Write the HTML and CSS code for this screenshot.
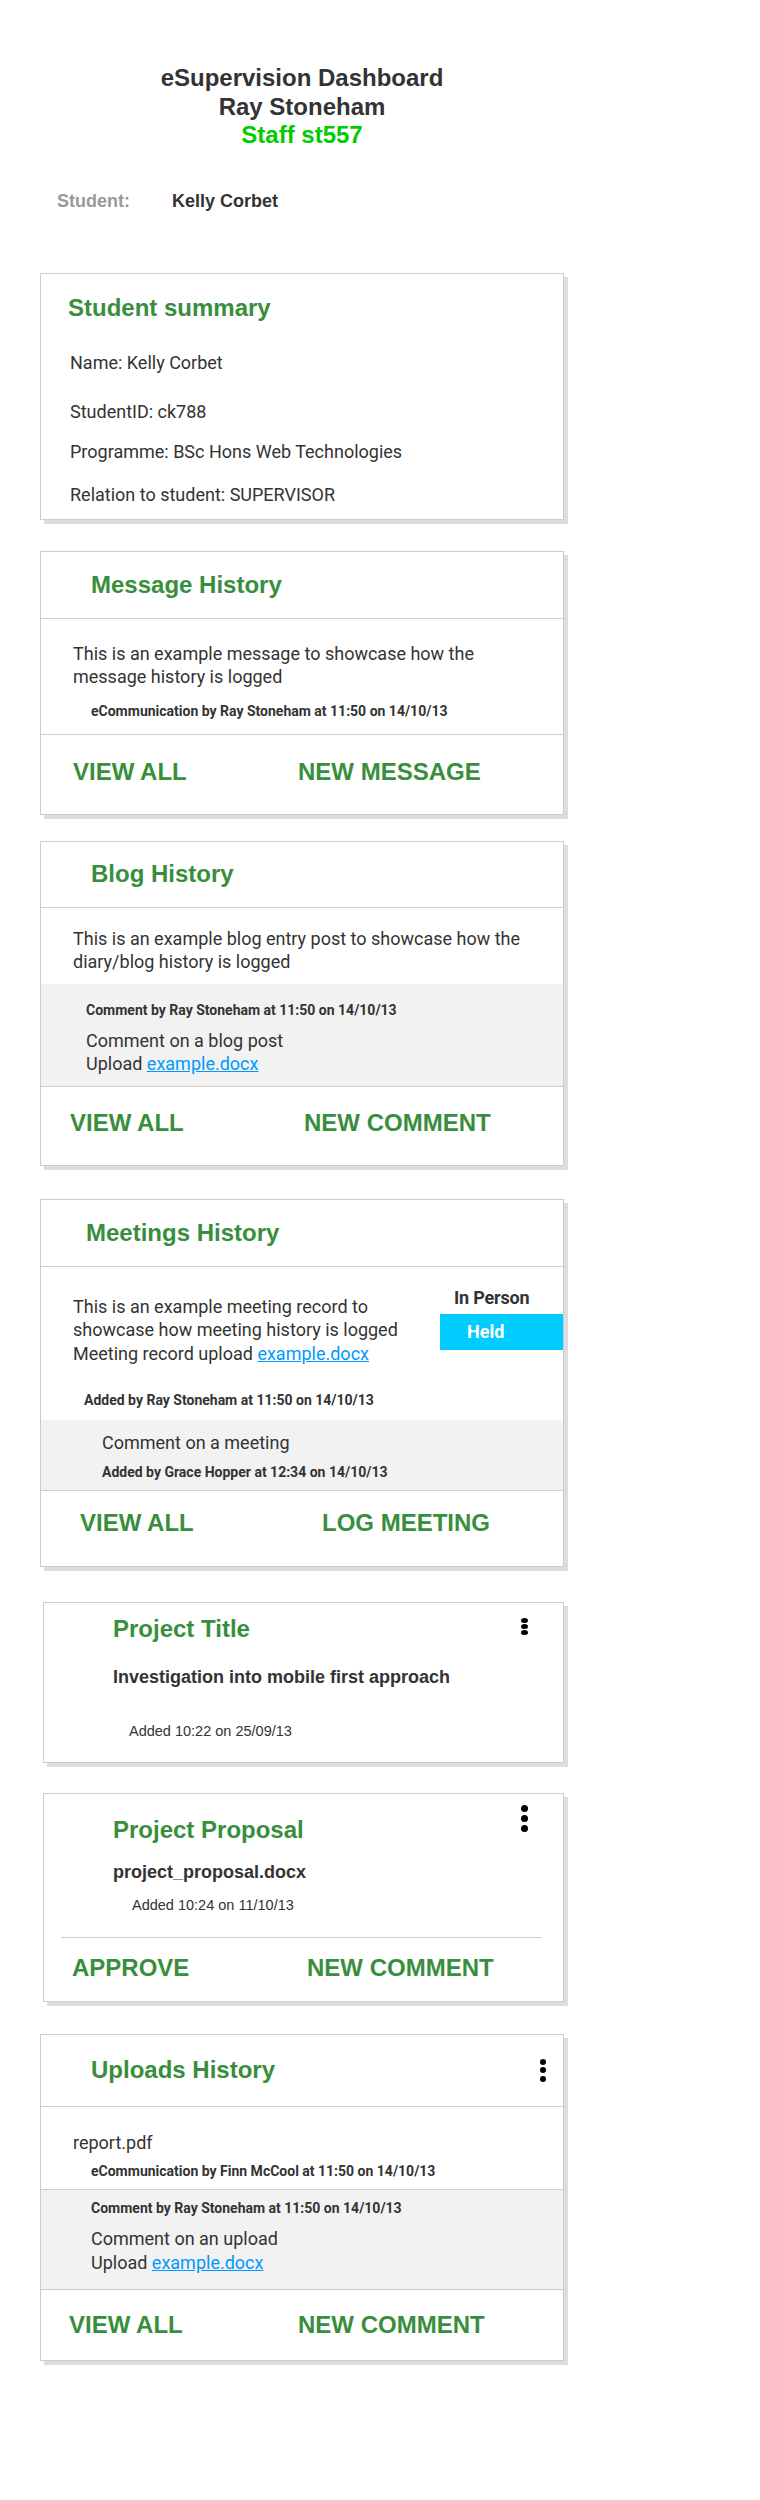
FILE: index.html
```html
<!DOCTYPE html>
<html lang="en">
<head>
<meta charset="utf-8">
<title>eSupervision Dashboard</title>
<link rel="stylesheet" href="styles.css">
</head>
<body>
<div class="page">
  <header class="top">
    <div>eSupervision Dashboard</div>
    <div>Ray Stoneham</div>
    <div class="staff">Staff st557</div>
  </header>

  <div class="student-row">
    <span class="student-label">Student:</span>
    <span class="student-name">Kelly Corbet</span>
  </div>

  <section class="card summary">
    <h2 class="title">Student summary</h2>
    <p class="s-name">Name: Kelly Corbet</p>
    <p class="s-id">StudentID: ck788</p>
    <p class="s-prog">Programme: BSc Hons Web Technologies</p>
    <p class="s-rel">Relation to student: SUPERVISOR</p>
  </section>

  <section class="card messages">
    <div class="head"><h2 class="title">Message History</h2></div>
    <div class="body">
      <p class="text">This is an example message to showcase how the message history is logged</p>
      <p class="meta">eCommunication by Ray Stoneham at 11:50 on 14/10/13</p>
    </div>
    <div class="foot">
      <span class="btn first">VIEW ALL</span>
      <span class="btn">NEW MESSAGE</span>
    </div>
  </section>

  <section class="card blog">
    <div class="head"><h2 class="title">Blog History</h2></div>
    <div class="body">
      <p class="text">This is an example blog entry post to showcase how the diary/blog history is logged</p>
    </div>
    <div class="comment">
      <p class="meta">Comment by Ray Stoneham at 11:50 on 14/10/13</p>
      <p class="text">Comment on a blog post<br>Upload <a href="#">example.docx</a></p>
    </div>
    <div class="foot">
      <span class="btn first">VIEW ALL</span>
      <span class="btn">NEW COMMENT</span>
    </div>
  </section>

  <section class="card meetings">
    <div class="head"><h2 class="title">Meetings History</h2></div>
    <div class="body">
      <div class="m-row">
        <p class="text">This is an example meeting record to showcase how meeting history is logged<br>Meeting record upload <a href="#">example.docx</a></p>
        <div class="m-status">
          <div class="m-type">In Person</div>
          <div class="m-held">Held</div>
        </div>
      </div>
      <p class="meta">Added by Ray Stoneham at 11:50 on 14/10/13</p>
    </div>
    <div class="comment">
      <p class="text">Comment on a meeting</p>
      <p class="meta">Added by Grace Hopper at 12:34 on 14/10/13</p>
    </div>
    <div class="foot">
      <span class="btn first">VIEW ALL</span>
      <span class="btn">LOG MEETING</span>
    </div>
  </section>

  <section class="card narrow ptitle">
    <div class="phead">
      <h2 class="title">Project Title</h2>
      <span class="kebab small"><i></i><i></i><i></i></span>
    </div>
    <p class="strong">Investigation into mobile first approach</p>
    <p class="added">Added 10:22 on 25/09/13</p>
  </section>

  <section class="card narrow proposal">
    <div class="phead">
      <h2 class="title">Project Proposal</h2>
      <span class="kebab large"><i></i><i></i><i></i></span>
    </div>
    <p class="strong">project_proposal.docx</p>
    <p class="added">Added 10:24 on 11/10/13</p>
    <div class="rule"></div>
    <div class="foot">
      <span class="btn first">APPROVE</span>
      <span class="btn">NEW COMMENT</span>
    </div>
  </section>

  <section class="card uploads">
    <div class="head">
      <h2 class="title">Uploads History</h2>
      <span class="kebab medium"><i></i><i></i><i></i></span>
    </div>
    <div class="body">
      <p class="text">report.pdf</p>
      <p class="meta">eCommunication by Finn McCool at 11:50 on 14/10/13</p>
    </div>
    <div class="comment">
      <p class="meta">Comment by Ray Stoneham at 11:50 on 14/10/13</p>
      <p class="text">Comment on an upload<br>Upload <a href="#">example.docx</a></p>
    </div>
    <div class="foot">
      <span class="btn first">VIEW ALL</span>
      <span class="btn">NEW COMMENT</span>
    </div>
  </section>
</div>
</body>
</html>
```

FILE: styles.css
```css
* { box-sizing: border-box; }

body {
  margin: 0;
  background: #ffffff;
  color: #333333;
  font-family: Roboto, "Noto Sans", sans-serif;
}

p, h2 { margin: 0; }

.page {
  width: 524px;
  margin-left: 40px;
  padding-top: 64px;
  padding-bottom: 140px;
}

/* ---------- top header ---------- */
.top {
  text-align: center;
  font-family: "Liberation Sans", Arial, sans-serif;
  font-weight: bold;
  font-size: 24px;
  line-height: 28.5px;
  color: #333333;
}
.staff { color: #00cc00; }

.student-row {
  display: flex;
  margin-top: 41px;
  padding-left: 17px;
  font-family: "Liberation Sans", Arial, sans-serif;
  font-weight: bold;
  font-size: 18px;
  line-height: 20px;
}
.student-label { width: 115px; color: #999999; }
.student-name { color: #333333; }

/* ---------- cards ---------- */
.card {
  border: 1px solid #cccccc;
  background: #ffffff;
  box-shadow: 4px 4px 0 #dddddd;
  margin-top: 30px;
}
.card.narrow { margin-left: 3px; }

.title {
  font-family: "Liberation Sans", Arial, sans-serif;
  font-weight: bold;
  font-size: 24px;
  line-height: 28px;
  color: #388e3c;
}

.text {
  font-size: 18px;
  line-height: 23.5px;
  color: #333333;
}
.meta {
  font-size: 14px;
  line-height: 18px;
  font-weight: bold;
  letter-spacing: 0;
  color: #333333;
}
a { color: #0099ff; text-decoration: underline; }

.head {
  display: flex;
  align-items: center;
  justify-content: space-between;
  border-bottom: 1px solid #cccccc;
  padding-left: 50px;
  padding-right: 14px;
}

.comment {
  background: #f2f2f2;
}

.foot {
  display: flex;
  border-top: 1px solid #cccccc;
}
.btn {
  font-family: "Liberation Sans", Arial, sans-serif;
  font-weight: bold;
  font-size: 24px;
  line-height: 28px;
  color: #388e3c;
}

/* ---------- student summary ---------- */
.summary {
  margin-top: 62px;
  height: 247px;
  padding: 20px 0 0 27px;
}
.summary p {
  font-size: 18px;
  line-height: 22px;
  padding-left: 2px;
}
.s-name { margin-top: 30px; }
.s-id { margin-top: 27px; }
.s-prog { margin-top: 18px; }
.s-rel { margin-top: 21px; }

/* ---------- message history ---------- */
.messages { margin-top: 31px; }
.messages .head { height: 67px; }
.messages .body { padding: 23px 0 14px 32px; }
.messages .body .text { width: 430px; }
.messages .body .meta { margin-top: 13px; padding-left: 18px; }
.messages .foot { padding: 23px 0 28px 32px; }
.messages .first { width: 225px; }

/* ---------- blog history ---------- */
.blog { margin-top: 26px; }
.blog .head { height: 66px; }
.blog .body { padding: 19px 0 10px 32px; }
.blog .comment { padding: 17px 0 10px 45px; }
.blog .comment .meta { margin-bottom: 10px; }
.blog .foot { padding: 22px 0 28px 29px; }
.blog .first { width: 234px; }

/* ---------- meetings ---------- */
.meetings { margin-top: 33px; }
.meetings .head { height: 67px; padding-left: 45px; }
.meetings .body { padding: 0 0 11px 0; }
.m-row { display: flex; justify-content: space-between; }
.m-row .text { padding: 28px 0 0 32px; width: 380px; }
.m-status { width: 123px; padding-top: 21px; }
.m-type {
  font-size: 18px;
  line-height: 20px;
  font-weight: bold;
  padding-left: 14px;
  letter-spacing: -0.2px;
}
.m-held {
  margin-top: 6px;
  height: 36px;
  line-height: 36px;
  background: #00ccff;
  color: #ffffff;
  font-size: 18px;
  font-weight: bold;
  padding-left: 27px;
}
.meetings .body .meta { margin-top: 26px; padding-left: 43px; }
.meetings .comment { padding: 11px 0 9px 61px; }
.meetings .comment .meta { margin-top: 8px; }
.meetings .foot { padding: 18px 0 29px 39px; }
.meetings .first { width: 242px; }

/* ---------- project title / proposal ---------- */
.phead {
  display: flex;
  justify-content: space-between;
  align-items: flex-start;
  padding-left: 69px;
  padding-right: 35px;
}
.strong {
  font-family: "Liberation Sans", Arial, sans-serif;
  font-weight: bold;
  font-size: 18px;
  line-height: 22px;
  padding-left: 69px;
  color: #333333;
}
.added {
  font-family: "Liberation Sans", Arial, sans-serif;
  font-size: 14.5px;
  line-height: 18px;
  color: #333333;
}

.ptitle { margin-top: 35px; padding: 12px 0 22px 0; }
.ptitle .strong { margin-top: 23px; }
.ptitle .added { margin-top: 34px; padding-left: 85px; }

.proposal { margin-top: 30px; padding: 22px 0 19px 0; }
.proposal .strong { margin-top: 17px; }
.proposal .added { margin-top: 13px; padding-left: 88px; }
.rule {
  margin: 23px 21px 0 17px;
  border-top: 1px solid #cccccc;
}
.proposal .foot { border-top: none; padding: 16px 0 0 28px; }
.proposal .first { width: 235px; }

/* ---------- kebab icons ---------- */
.kebab { display: flex; flex-direction: column; align-items: center; }
.kebab i { display: block; background: #000000; border-radius: 50%; }
.kebab.small { margin-top: 3px; gap: 1px; }
.kebab.small i { width: 7px; height: 5px; }
.kebab.large { margin-top: -11px; gap: 3px; }
.kebab.large i { width: 7px; height: 7px; }
.kebab.medium { gap: 2.5px; }
.kebab.medium i { width: 6px; height: 6px; }

/* ---------- uploads ---------- */
.uploads { margin-top: 32px; }
.uploads .head { height: 72px; padding-right: 17px; }
.uploads .body { padding: 24px 0 9px 32px; }
.uploads .body .meta { margin-top: 8px; padding-left: 18px; }
.uploads .comment { border-top: 1px solid #cccccc; padding: 9px 0 15px 50px; }
.uploads .comment .meta { margin-bottom: 10px; }
.uploads .foot { padding: 21px 0 21px 28px; }
.uploads .first { width: 229px; }
```
